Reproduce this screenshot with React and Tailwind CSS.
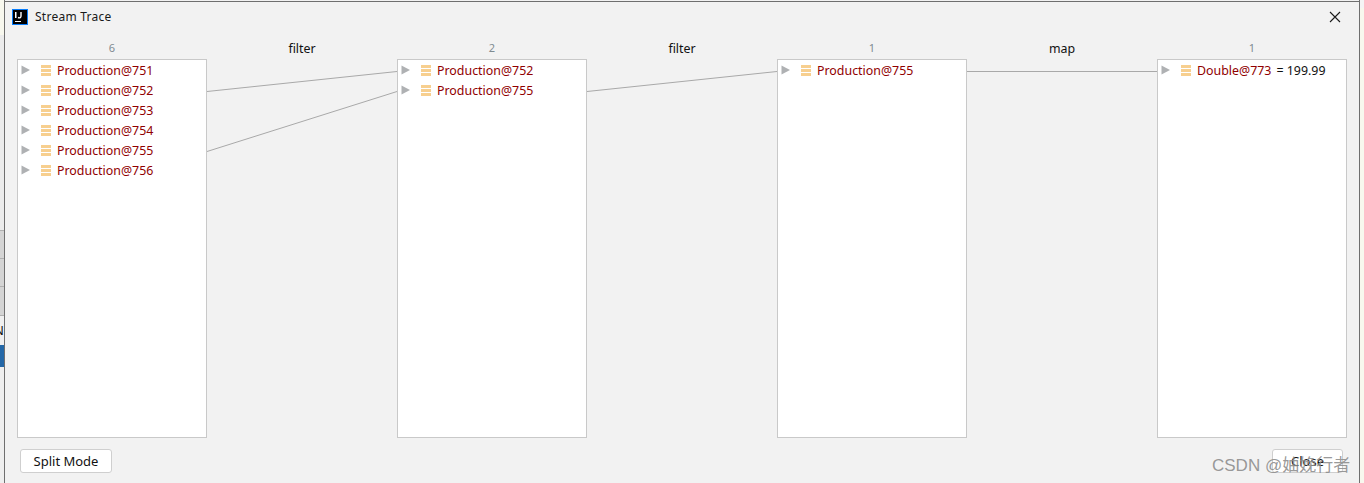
import React from "react";

const font = { fontFamily: '"Noto Sans", "Open Sans", sans-serif' };

function Row({ name, value }) {
  return (
    <div className="flex h-5 items-center">
      <svg width="10" height="10" viewBox="0 0 10 10" className="ml-[3px] shrink-0">
        <path d="M0.5 0.5 L9 5 L0.5 9.5 Z" fill="#afb1b3" />
      </svg>
      <svg width="10" height="11" viewBox="0 0 10 11" className="ml-[10px] shrink-0">
        <rect x="0" y="0" width="10" height="3" fill="#f7cf8f" />
        <rect x="0" y="4" width="10" height="3" fill="#f7cf8f" />
        <rect x="0" y="8" width="10" height="3" fill="#f7cf8f" />
      </svg>
      <span className="ml-[6px] whitespace-nowrap pt-px text-[12.4px] leading-5 text-[#900000]">{name}</span>
      {value && <span className="ml-[5px] whitespace-nowrap pt-px text-[12.4px] leading-5 text-[#111111]">{value}</span>}
    </div>
  );
}

function Column({ count, rows }) {
  return (
    <div className="flex w-[190px] shrink-0 flex-col">
      <div className="h-[20px] text-center text-[11px] leading-[18px] text-[#7f8b91]">{count}</div>
      <div className="h-[379px] border border-[#c9c9c9] bg-white">
        {rows.map((r) => (
          <Row key={r.name} name={r.name} value={r.value} />
        ))}
      </div>
    </div>
  );
}

function Connector({ label, lines }) {
  return (
    <div className="flex w-[190px] shrink-0 flex-col">
      <div className="h-[20px] text-center text-[12.4px] leading-[20px] text-[#111111]">{label}</div>
      <svg width="190" height="379" viewBox="0 0 190 379" className="block">
        {lines.map((l, i) => (
          <line key={i} x1="0" y1={l[0]} x2="190" y2={l[1]} stroke="#a9a9a9" strokeWidth="1" />
        ))}
      </svg>
    </div>
  );
}

export default function App() {
  return (
    <div className="relative h-[483px] w-[1364px] overflow-hidden bg-[#f2f2f2]" style={font}>
      <div className="flex h-full">
        {/* Window behind the dialog */}
        <div className="flex w-[4px] shrink-0 flex-col bg-[#d4d4d4]">
          <div className="h-[35px] bg-[#f8f8ee]" />
          <div className="h-[195px] bg-[#ececec]" />
          <div className="h-[28px] border-t border-[#b0b0b0]" />
          <div className="h-[28px] border-t border-[#b0b0b0]" />
          <div className="h-[29px] border-t border-[#b0b0b0]" />
          <div className="flex h-[30px] items-center justify-end overflow-hidden border-t border-[#b0b0b0] bg-[#f0f0f0] text-[13px] leading-none text-[#111111]">
            <span className="shrink-0">N</span>
          </div>
          <div className="h-[22px] bg-[#2468a8]" />
          <div className="flex-1 bg-[#efefef]" />
        </div>
        <div className="w-px shrink-0 bg-[#6f6f6f]" />
        {/* Dialog */}
        <div className="mt-px flex w-[1354px] min-w-0 shrink-0 flex-col border-t border-[#6f6f6f] bg-[#f2f2f2]">
          <div className="flex h-[30px] shrink-0 items-center pl-[7px] pr-[18px]">
            <svg width="16" height="16" viewBox="0 0 16 16" className="shrink-0">
              <rect x="0.5" y="0.5" width="15" height="15" fill="#000000" stroke="#087cfa" />
              <rect x="3" y="12" width="6" height="1" fill="#ffffff" />
              <rect x="3" y="3" width="1.5" height="6" fill="#ffffff" />
              <path d="M6 8.5 C8 9.5 9 8.5 9 7 V3" stroke="#ffffff" strokeWidth="1.4" fill="none" />
            </svg>
            <span className="ml-[7px] text-[12px] tracking-[0.25px] text-[#1a1a1a]">Stream Trace</span>
            <svg width="12" height="12" viewBox="0 0 12 12" className="ml-auto shrink-0">
              <path d="M1 1 L11 11 M11 1 L1 11" stroke="#1a1a1a" strokeWidth="1.1" />
            </svg>
          </div>
          <div className="flex pl-[12px] pt-[7px]">
            <Column
              count="6"
              rows={[
                { name: "Production@751" },
                { name: "Production@752" },
                { name: "Production@753" },
                { name: "Production@754" },
                { name: "Production@755" },
                { name: "Production@756" },
              ]}
            />
            <Connector label="filter" lines={[[32.5, 12.5], [92.5, 32.5]]} />
            <Column count="2" rows={[{ name: "Production@752" }, { name: "Production@755" }]} />
            <Connector label="filter" lines={[[32.5, 12.5]]} />
            <Column count="1" rows={[{ name: "Production@755" }]} />
            <Connector label="map" lines={[[12.5, 12.5]]} />
            <Column count="1" rows={[{ name: "Double@773", value: "= 199.99" }]} />
          </div>
          <div className="flex items-center justify-between pl-[15px] pr-[16px] pt-[11px]">
            <button className="h-[24px] w-[92px] rounded-[3px] border border-[#cfcfcf] bg-white pt-[2px] text-[13px] text-[#111111]">
              Split Mode
            </button>
            <button className="h-[24px] w-[71px] rounded-[3px] border border-[#cfcfcf] bg-white pt-[2px] text-[13px] text-[#111111]">
              Close
            </button>
          </div>
        </div>
        <div className="w-px shrink-0 bg-[#6f6f6f]" />
        <div className="flex flex-1 flex-col bg-[#f8f8ee]">
          <div className="h-[8px] bg-[#f5f5f5]" />
        </div>
      </div>
      {/* Watermark over the page */}
      <div
        className="absolute left-[1212px] top-[455px] whitespace-nowrap text-[17px] leading-[22px] text-[#8c8c8c]/90"
        style={{ fontFamily: '"Liberation Sans", "Noto Sans CJK SC", sans-serif' }}
      >
        CSDN @妯娩行者
      </div>
    </div>
  );
}
